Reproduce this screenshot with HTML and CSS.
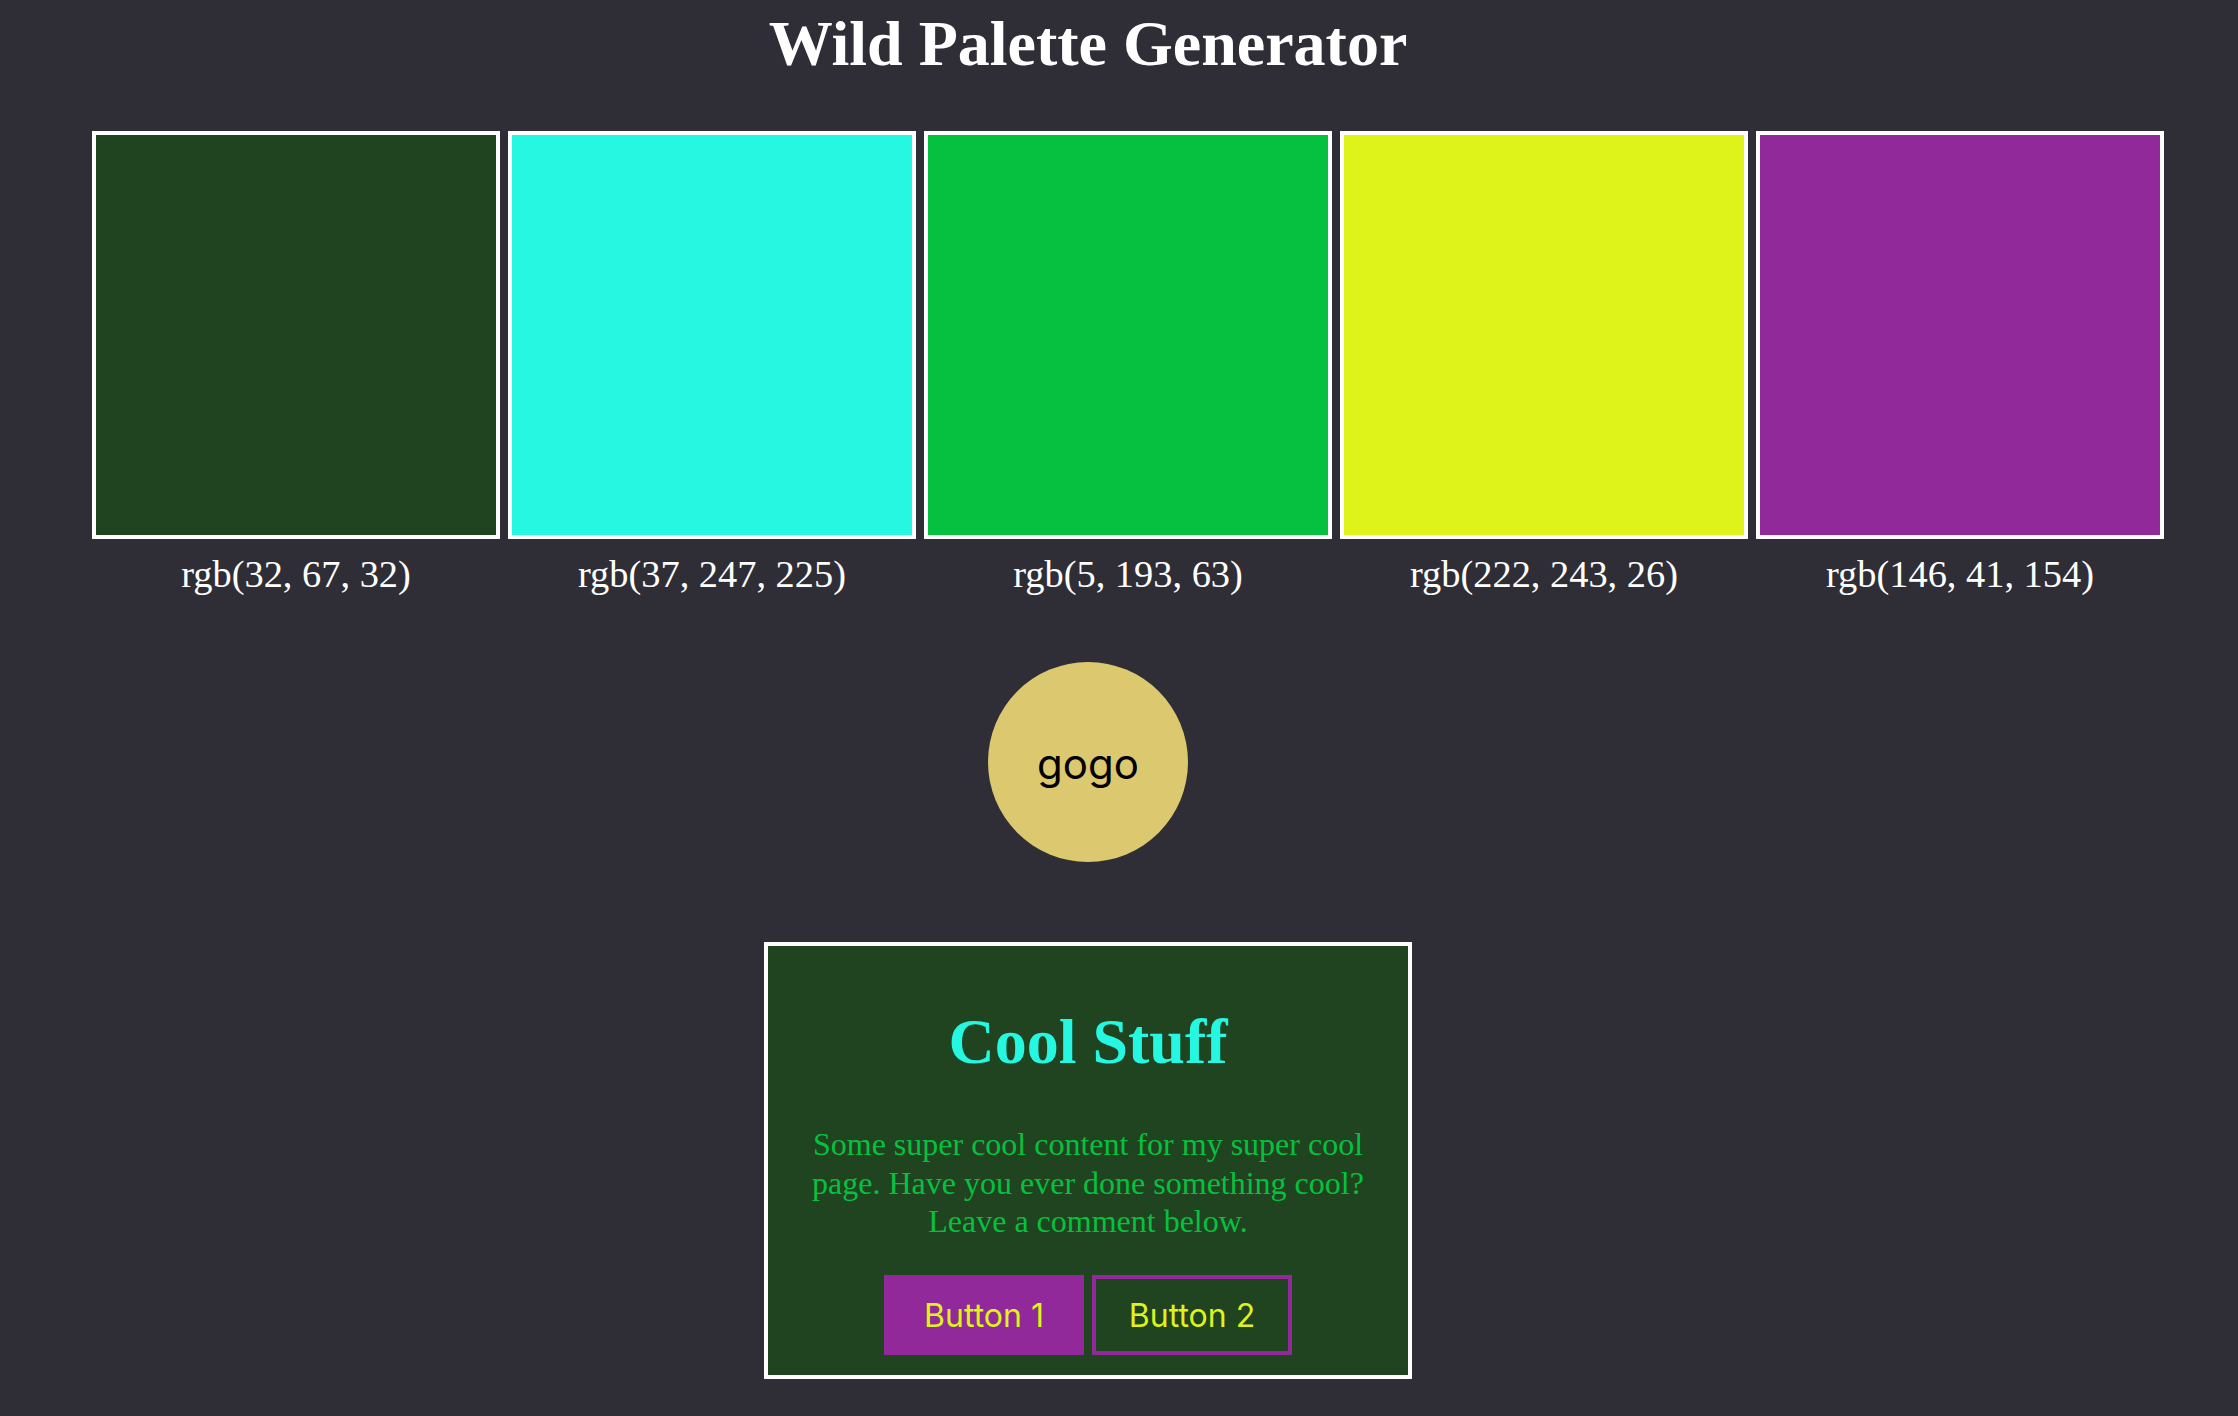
FILE: index.html
```html
<!DOCTYPE html>
<html lang="en">
<head>
<meta charset="utf-8">
<title>Wild Palette Generator</title>
<link rel="stylesheet" href="styles.css">
</head>
<body>
<div class="page">
  <h1 class="title">Wild Palette Generator</h1>
  <div class="palette">
    <div class="swatch-col">
      <div class="swatch" style="background: rgb(32, 67, 32)"></div>
      <div class="swatch-label">rgb(32, 67, 32)</div>
    </div>
    <div class="swatch-col">
      <div class="swatch" style="background: rgb(37, 247, 225)"></div>
      <div class="swatch-label">rgb(37, 247, 225)</div>
    </div>
    <div class="swatch-col">
      <div class="swatch" style="background: rgb(5, 193, 63)"></div>
      <div class="swatch-label">rgb(5, 193, 63)</div>
    </div>
    <div class="swatch-col">
      <div class="swatch" style="background: rgb(222, 243, 26)"></div>
      <div class="swatch-label">rgb(222, 243, 26)</div>
    </div>
    <div class="swatch-col">
      <div class="swatch" style="background: rgb(146, 41, 154)"></div>
      <div class="swatch-label">rgb(146, 41, 154)</div>
    </div>
  </div>
  <div class="go-wrap">
    <button class="go">gogo</button>
  </div>
  <div class="card">
    <h1 class="card-title">Cool Stuff</h1>
    <p class="card-text">Some super cool content for my super cool page. Have you ever done something cool? Leave a comment below.</p>
    <div class="card-actions">
      <button class="btn btn-primary">Button 1</button>
      <button class="btn btn-outline">Button 2</button>
    </div>
  </div>
</div>
</body>
</html>
```

FILE: styles.css
```css
html, body {
  margin: 0;
  padding: 0;
  background: #2f2e36;
}

body {
  font-family: "Liberation Serif", "Times New Roman", serif;
  color: #ffffff;
}

.page {
  width: 2176px;
  padding-top: 7px;
}

.title {
  margin: 0;
  font-size: 64px;
  line-height: 74px;
  font-weight: bold;
  text-align: center;
  color: #ffffff;
}

.palette {
  display: flex;
  gap: 8px;
  padding-left: 92px;
  margin-top: 50px;
}

.swatch-col {
  width: 408px;
  display: flex;
  flex-direction: column;
  align-items: center;
}

.swatch {
  width: 408px;
  height: 408px;
  box-sizing: border-box;
  border: 4px solid #ffffff;
}

.swatch-label {
  margin-top: 13px;
  font-size: 38.4px;
  line-height: 44px;
  text-align: center;
  color: #ffffff;
}

.go-wrap {
  display: flex;
  justify-content: center;
  margin-top: 66px;
}

.go {
  width: 200px;
  height: 200px;
  box-sizing: border-box;
  border-radius: 50%;
  border: none;
  padding: 4px 0 0;
  background: #dcc86f;
  color: #000000;
  font-family: Inter, "Liberation Sans", sans-serif;
  font-size: 42px;
  line-height: 1;
}

.card {
  width: 648px;
  box-sizing: border-box;
  margin: 80px auto 0;
  border: 4px solid #ffffff;
  background: rgb(32, 67, 32);
  padding: 16px 32px 20px;
  text-align: center;
}

.card-title {
  margin: 43px 0 46px;
  font-size: 64px;
  line-height: 74px;
  font-weight: bold;
  color: rgb(37, 247, 225);
}

.card-text {
  margin: 0;
  font-size: 32px;
  line-height: 38.5px;
  color: rgb(5, 193, 63);
}

.card-actions {
  display: flex;
  justify-content: center;
  gap: 8px;
  margin-top: 34px;
}

.btn {
  width: 200px;
  height: 80px;
  box-sizing: border-box;
  padding: 2px 0 0;
  font-family: Inter, "Liberation Sans", sans-serif;
  font-size: 32px;
  color: rgb(222, 243, 26);
  border: 4px solid rgb(146, 41, 154);
}

.btn-primary {
  background: rgb(146, 41, 154);
}

.btn-outline {
  background: transparent;
}
```
